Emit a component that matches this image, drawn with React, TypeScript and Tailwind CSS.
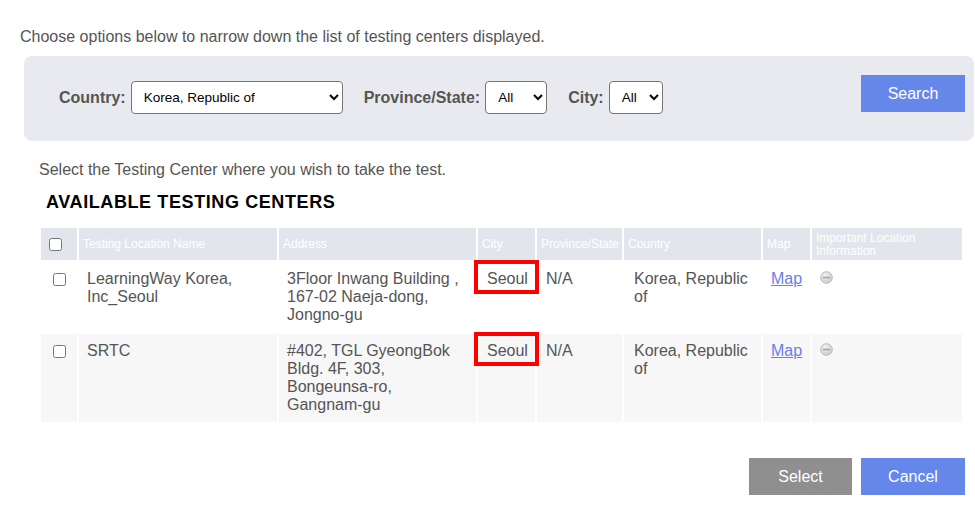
import React from "react";

// Testing center search — filter panel, results table, action buttons

const headers = [
  { label: "Testing Location Name", w: "w-[198px]" },
  { label: "Address", w: "w-[197px]" },
  { label: "City", w: "w-[57px]" },
  { label: "Province/State", w: "w-[85px]" },
  { label: "Country", w: "w-[137px]" },
  { label: "Map", w: "w-[47px]" },
  { label: "Important Location Information", w: "w-[150px]" },
];

const rows = [
  {
    name: ["LearningWay Korea,", "Inc_Seoul"],
    address: ["3Floor Inwang Building ,", "167-02 Naeja-dong,", "Jongno-gu"],
  },
  {
    name: ["SRTC"],
    address: ["#402, TGL GyeongBok", "Bldg. 4F, 303,", "Bongeunsa-ro,", "Gangnam-gu"],
  },
];

function MinusCircle() {
  return (
    <svg width="13" height="13" viewBox="0 0 13 13" className="block">
      <defs>
        <radialGradient id="mc" cx="40%" cy="35%" r="70%">
          <stop offset="0%" stopColor="#f4f4f4" />
          <stop offset="100%" stopColor="#c9c9c9" />
        </radialGradient>
      </defs>
      <circle cx="6.5" cy="6.5" r="5.8" fill="url(#mc)" stroke="#b9b9b9" strokeWidth="1" />
      <rect x="3" y="5.6" width="7" height="1.8" fill="#a8a8a8" />
    </svg>
  );
}

function Select({ value, w }: { value: string; w: string }) {
  return (
    <select
      defaultValue={value}
      className={`${w} h-[33px] rounded-[4px] border border-[#767676] bg-white pl-[8px] pr-[4px] text-[13.5px] font-normal text-black`}
    >
      <option>{value}</option>
    </select>
  );
}

export default function App() {
  return (
    <div
      className="w-[975px] h-[513px] bg-white text-[#555] overflow-hidden"
      style={{ fontFamily: '"Liberation Sans", Arial, sans-serif' }}
    >
      <p className="pl-[20px] pt-[28px] text-[16px] leading-[18px]">
        Choose options below to narrow down the list of testing centers displayed.
      </p>

      {/* ── Filter panel ─────────────────────────────── */}
      <div className="ml-[24px] mt-[10px] w-[950px] h-[85px] rounded-[8px] bg-[#e9eaef] flex items-start pl-[35px] pr-[9px]">
        <div className="flex items-center mt-[25px] text-[16px] font-bold">
          <span className="mr-[5px]">Country:</span>
          <Select value="Korea, Republic of" w="w-[212px]" />
          <span className="ml-[21px] mr-[5px]">Province/State:</span>
          <Select value="All" w="w-[62px]" />
          <span className="ml-[21px] mr-[5px]">City:</span>
          <Select value="All" w="w-[54px]" />
        </div>
        <button className="ml-auto mt-[19px] w-[104px] h-[37px] bg-[#6687ea] text-white text-[16px]">
          Search
        </button>
      </div>

      <p className="pl-[39px] mt-[20px] text-[16px] leading-[18px]">
        Select the Testing Center where you wish to take the test.
      </p>
      <h2 className="pl-[46px] mt-[12px] text-[18px] leading-[22px] font-bold tracking-[0.6px] text-black">
        AVAILABLE TESTING CENTERS
      </h2>

      {/* ── Results table ────────────────────────────── */}
      <table className="ml-[39px] mt-[13px] w-[925px] table-fixed border-separate border-spacing-[2px] text-[16px] leading-[18px]">
        <thead>
          <tr className="h-[32px]">
            <th className="w-[36px] bg-[#e2e6ec] p-[4px] align-middle text-left">
              <input type="checkbox" className="block ml-[4px] w-[13px] h-[13px]" />
            </th>
            {headers.map((h) => (
              <th
                key={h.label}
                className={`${h.w} bg-[#e2e6ec] px-[4px] pt-[3px] pb-[2px] align-middle text-left text-[12px] leading-[13px] font-normal text-white`}
              >
                {h.label}
              </th>
            ))}
          </tr>
        </thead>
        <tbody>
          {rows.map((r, i) => {
            const bg = i === 0 ? "bg-white" : "bg-[#f7f7f7]";
            return (
              <tr key={i}>
                <td className={`${bg} align-top pt-[11px] pl-[8px]`}>
                  <input type="checkbox" className="block ml-[4px] w-[13px] h-[13px]" />
                </td>
                <td className={`${bg} align-top pt-[8px] pb-[8px] pl-[8px]`}>
                  {r.name.map((l) => (
                    <div key={l}>{l}</div>
                  ))}
                </td>
                <td className={`${bg} align-top pt-[8px] pb-[8px] pl-[8px]`}>
                  {r.address.map((l) => (
                    <div key={l}>{l}</div>
                  ))}
                </td>
                <td className={`${bg} relative align-top pt-[8px] pl-[9px]`}>
                  <div className="absolute left-[-4px] top-[-2px] w-[65px] h-[34px] border-4 border-[#ff0000]" />
                  Seoul
                </td>
                <td className={`${bg} align-top pt-[8px] pl-[9px]`}>N/A</td>
                <td className={`${bg} align-top pt-[8px] pl-[10px]`}>
                  <div>Korea, Republic</div>
                  <div>of</div>
                </td>
                <td className={`${bg} align-top pt-[8px] pl-[8px]`}>
                  <a href="#" className="text-[#6a7fe6] underline">
                    Map
                  </a>
                </td>
                <td className={`${bg} align-top pt-[9px] pl-[8px]`}>
                  <MinusCircle />
                </td>
              </tr>
            );
          })}
        </tbody>
      </table>

      {/* ── Actions ──────────────────────────────────── */}
      <div className="flex justify-end gap-[9px] pr-[10px] mt-[34px]">
        <button className="w-[103px] h-[37px] bg-[#8f8f8f] text-white text-[16px]">Select</button>
        <button className="w-[104px] h-[37px] bg-[#6687ea] text-white text-[16px]">Cancel</button>
      </div>
    </div>
  );
}
